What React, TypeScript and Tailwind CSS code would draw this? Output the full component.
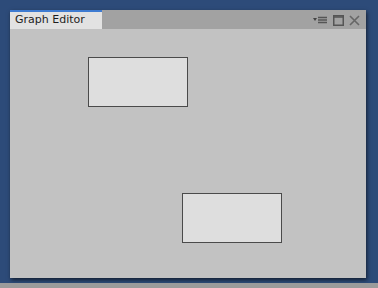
export default function App() {
  return (
    <div className="flex h-[288px] w-[378px] flex-col bg-[#2d4b79] font-['DejaVu_Sans',sans-serif]">
      <div className="flex-1 pl-[10px] pt-[10px]">
        <div className="flex h-[268px] w-[356px] flex-col bg-[#c2c2c2] shadow-[1px_2px_4px_rgba(0,0,0,0.6)]">
          <div className="flex h-[19px] items-stretch bg-[#a2a2a2]">
            <div className="flex w-[92px] flex-col border-t-2 border-[#3e7bd1] bg-[#e2e2e2]">
              <span className="pl-[5px] pt-[1px] text-[11px] leading-[14px] text-[#1e1e1e]">Graph Editor</span>
            </div>
            <div className="flex-1" />
            <div className="flex items-center gap-[5px] pr-[6px] pt-[1px]">
              <svg width="15" height="10" viewBox="0 0 15 10">
                <path d="M0 3h4l-2 3z" fill="#444" />
                <path d="M5 2.5h9M5 5h9M5 7.5h9" stroke="#555" strokeWidth="1.3" />
              </svg>
              <svg width="11" height="11" viewBox="0 0 11 11">
                <rect x="0.75" y="0.75" width="9.5" height="9.5" fill="none" stroke="#555" strokeWidth="1.5" />
                <path d="M0.75 2h9.5" stroke="#555" strokeWidth="1.5" />
              </svg>
              <svg width="11" height="11" viewBox="0 0 11 11">
                <path d="M1 1l9 9M10 1l-9 9" stroke="#666" strokeWidth="1.6" />
              </svg>
            </div>
          </div>
          <div className="flex flex-1 flex-col">
            <div className="ml-[78px] mt-[28px] h-[50px] w-[100px] border border-[#4a4a4a] bg-[#dedede]" />
            <div className="ml-[172px] mt-[86px] h-[50px] w-[100px] border border-[#4a4a4a] bg-[#dedede]" />
          </div>
        </div>
      </div>
      <div className="h-[5px] bg-[#9b9b9b]" />
    </div>
  );
}
